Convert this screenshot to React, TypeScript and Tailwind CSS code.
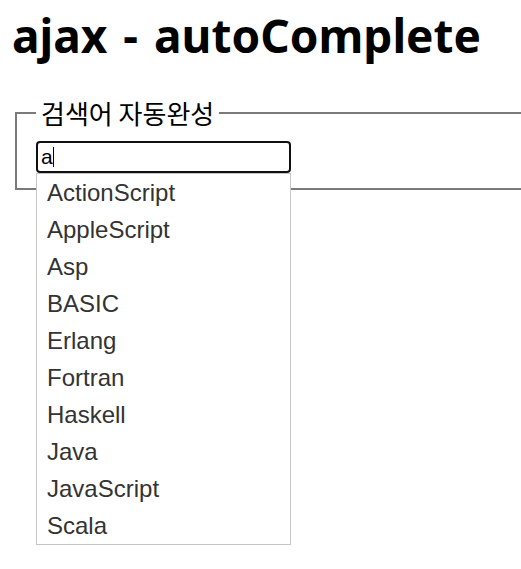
import React from 'react'

const languages = [
  'ActionScript',
  'AppleScript',
  'Asp',
  'BASIC',
  'Erlang',
  'Fortran',
  'Haskell',
  'Java',
  'JavaScript',
  'Scala',
]

export default function App() {
  return (
    <div className="w-[521px] h-[569px] overflow-hidden bg-white text-black">
      <div className="px-[11px] pt-[5px]">
        <h1 className="ml-[1px] font-['Noto_Sans',sans-serif] font-bold text-[46px] leading-[60px] [word-spacing:4px]">
          ajax - autoComplete
        </h1>

        {/* search box */}
        <fieldset className="mt-[35px] ml-[4px] w-[580px] border-2 border-[#7a7a7a] pl-[19px] pt-[15px] pb-[15px]">
          <legend className="px-[5px] text-[26px] leading-[26px] font-['Noto_Sans_CJK_KR',sans-serif]">
            검색어 자동완성
          </legend>
          <div className="relative w-[255px]">
            <div className="flex items-center h-[32px] border-2 border-[#101010] rounded-[4px] pl-[3px] font-['Liberation_Sans',Arial,sans-serif] text-[21px]">
              <span>a</span>
              <span className="w-px h-[20px] bg-black" />
            </div>

            <ul className="absolute left-0 top-full w-[255px] border border-[#c5c5c5] bg-white font-['Liberation_Sans',Arial,sans-serif] text-[24px] text-[#333333]">
              {languages.map((lang) => (
                <li key={lang} className="h-[37px] leading-[37px] pl-[10px]">
                  {lang}
                </li>
              ))}
            </ul>
          </div>
        </fieldset>
      </div>
    </div>
  )
}
